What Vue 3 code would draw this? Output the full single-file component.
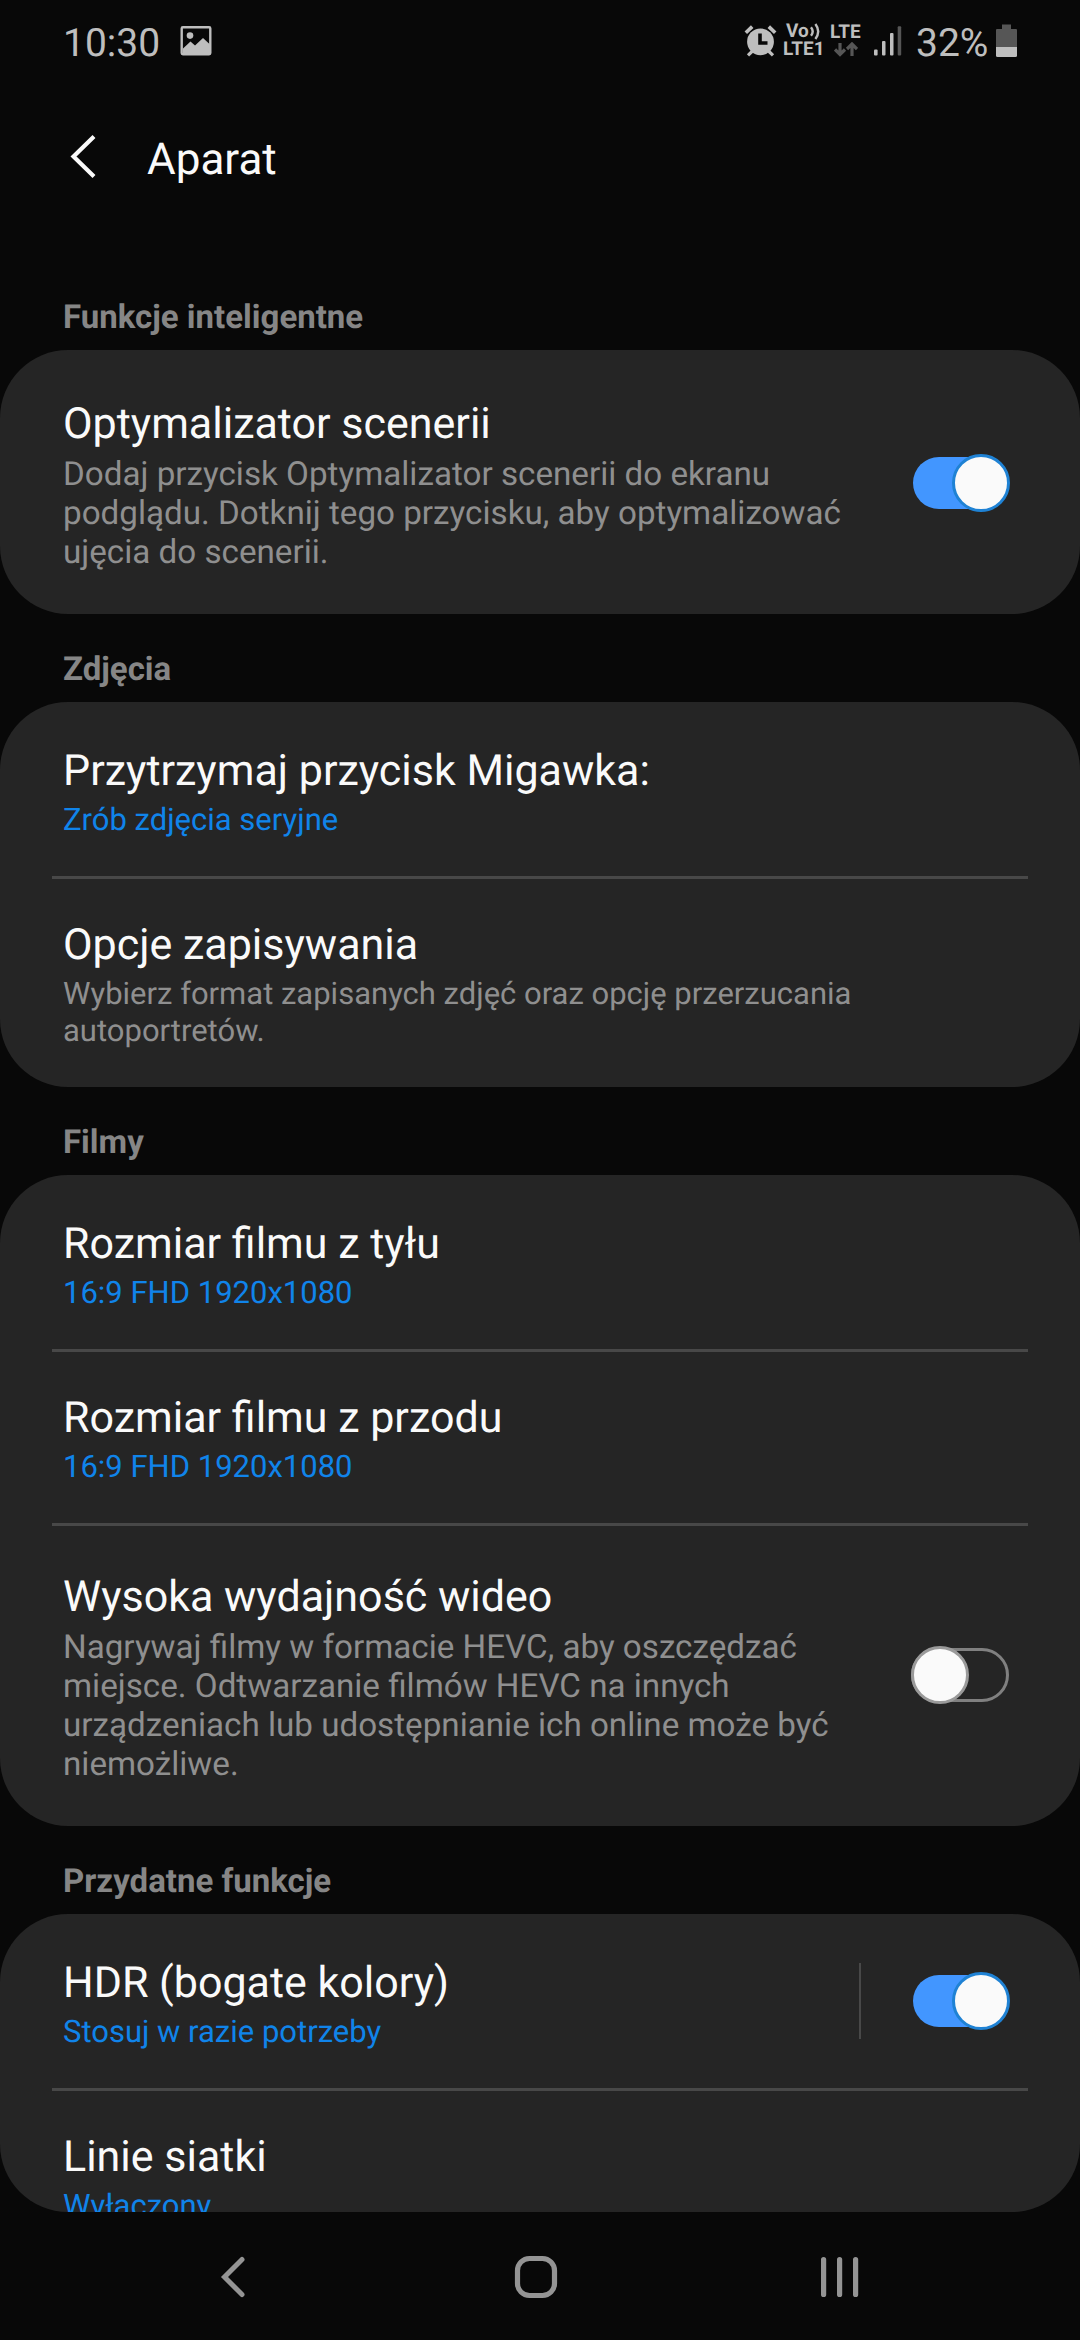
<template>
  <div class="screen">
    <header class="status">
      <span class="clock">10:30</span>
      <svg class="picture" width="32" height="30" viewBox="0 0 32 30" aria-hidden="true">
        <rect x="1.7" y="1.2" width="28.6" height="27.1" rx="1.2" fill="none" stroke="currentColor" stroke-width="2.4" />
        <circle cx="10" cy="9.6" r="3.3" fill="currentColor" />
        <path d="M3 22.5 L10.5 15.5 L15 19.5 L23 12 L30 18.5 V28 H3 Z" fill="currentColor" />
      </svg>

      <div class="tray">
        <svg class="alarm" width="33" height="32" viewBox="0 0 33 32" aria-hidden="true">
          <path d="M1.8 7.8 L8.2 1.6 M24.8 1.6 L31.2 7.8" stroke="currentColor" stroke-width="3.6" fill="none" />
          <path d="M8.5 26 L4 30.4 M24.5 26 L29 30.4" stroke="currentColor" stroke-width="3.2" fill="none" />
          <circle cx="16.5" cy="16.8" r="13.4" fill="currentColor" />
          <path d="M16 8.5 V18 H23.5" fill="none" stroke="#080808" stroke-width="3.6" />
        </svg>
        <div class="volte">
          <span class="vo">
            Vo
            <svg width="11" height="17" viewBox="0 0 11 17" aria-hidden="true">
              <path d="M1 4.2 Q4.4 8.5 1 12.8 M5.4 1 Q11 8.5 5.4 16" fill="none" stroke="currentColor" stroke-width="2.4" />
            </svg>
          </span>
          <span class="lte1">LTE1</span>
        </div>
        <div class="lte">
          <span>LTE</span>
          <svg width="24" height="15" viewBox="0 0 24 15" aria-hidden="true">
            <path d="M6 1 V11.5 M1 7.5 L6 12.5 L11 7.5 M18 14 V3 M13 7 L18 2 L23 7" fill="none" stroke="currentColor" stroke-width="3.2" />
          </svg>
        </div>
        <svg class="signal" width="28" height="30" viewBox="0 0 28 30" aria-hidden="true">
          <rect x="0" y="23.5" width="3.6" height="6" rx="1" fill="currentColor" />
          <rect x="8" y="15" width="3.5" height="14.5" rx="1" fill="currentColor" />
          <rect x="16" y="7" width="3.5" height="22.5" rx="1" fill="currentColor" />
          <rect x="23.7" y="0.3" width="3.5" height="29.2" rx="1" fill="#565656" />
        </svg>
        <span class="percent">32%</span>
        <svg class="battery" width="21" height="33" viewBox="0 0 21 33" aria-hidden="true">
          <path d="M6 0.5 H15 V5 H20 Q21 5 21 6 V23 H0 V6 Q0 5 1 5 H6 Z" fill="#565656" />
          <path d="M0 23 H21 V31.5 Q21 33 19.5 33 H1.5 Q0 33 0 31.5 Z" fill="currentColor" />
        </svg>
      </div>
    </header>

    <div class="toolbar">
      <svg class="back" width="28" height="44" viewBox="0 0 28 44" aria-hidden="true">
        <path d="M24 2.5 L3.5 22.5 L24 42.5" fill="none" stroke="currentColor" stroke-width="4.2" />
      </svg>
      <h1 class="heading">Aparat</h1>
    </div>

    <main class="content">
      <section v-for="group in groups" :key="group.name">
        <h2 class="group-name">{{ group.name }}</h2>
        <div class="card">
          <div
            v-for="row in group.rows"
            :key="row.title"
            class="row"
            :class="{ tall: row.tall }"
          >
            <div class="text">
              <p class="title">{{ row.title }}</p>
              <p class="desc" :class="{ value: row.value }">{{ row.value || row.desc }}</p>
            </div>
            <span v-if="row.split" class="split"></span>
            <span v-if="row.on !== undefined" class="switch" :class="{ on: row.on }" @click="row.on = !row.on">
              <span class="thumb"></span>
            </span>
          </div>
        </div>
      </section>
    </main>

    <nav class="navbar">
      <svg width="28" height="44" viewBox="0 0 28 44" aria-hidden="true">
        <path d="M23 4.5 L5.5 22 L23 39.5" fill="none" stroke="currentColor" stroke-width="5" stroke-linecap="round" />
      </svg>
      <svg class="home" width="44" height="44" viewBox="0 0 44 44" aria-hidden="true">
        <rect x="3.5" y="3.5" width="37" height="37" rx="12" fill="none" stroke="currentColor" stroke-width="5.2" />
      </svg>
      <svg width="40" height="44" viewBox="0 0 40 44" aria-hidden="true">
        <path d="M3.6 4.5 V39.5 M19.6 4.5 V39.5 M35.6 4.5 V39.5" fill="none" stroke="currentColor" stroke-width="5.2" stroke-linecap="round" />
      </svg>
    </nav>
  </div>
</template>

<script setup>
import { ref } from 'vue';

const groups = ref([
  {
    name: 'Funkcje inteligentne',
    rows: [
      {
        title: 'Optymalizator scenerii',
        desc: 'Dodaj przycisk Optymalizator scenerii do ekranu podglądu. Dotknij tego przycisku, aby optymalizować ujęcia do scenerii.',
        tall: true,
        on: true
      }
    ]
  },
  {
    name: 'Zdjęcia',
    rows: [
      { title: 'Przytrzymaj przycisk Migawka:', value: 'Zrób zdjęcia seryjne' },
      { title: 'Opcje zapisywania', desc: 'Wybierz format zapisanych zdjęć oraz opcję przerzucania autoportretów.' }
    ]
  },
  {
    name: 'Filmy',
    rows: [
      { title: 'Rozmiar filmu z tyłu', value: '16:9 FHD 1920x1080' },
      { title: 'Rozmiar filmu z przodu', value: '16:9 FHD 1920x1080' },
      {
        title: 'Wysoka wydajność wideo',
        desc: 'Nagrywaj filmy w formacie HEVC, aby oszczędzać miejsce. Odtwarzanie filmów HEVC na innych urządzeniach lub udostępnianie ich online może być niemożliwe.',
        tall: true,
        on: false
      }
    ]
  },
  {
    name: 'Przydatne funkcje',
    rows: [
      { title: 'HDR (bogate kolory)', value: 'Stosuj w razie potrzeby', split: true, on: true },
      { title: 'Linie siatki', value: 'Wyłączony' }
    ]
  }
]);
</script>

<style>
body {
  margin: 0;
  background: #080808;
}
</style>

<style scoped>
.screen {
  display: flex;
  flex-direction: column;
  width: 1080px;
  height: 2340px;
  overflow: hidden;
  background: #080808;
  color: #fafafa;
  font-family: Roboto, "Noto Sans", sans-serif;
  text-rendering: geometricPrecision;
}

.status {
  display: flex;
  align-items: flex-start;
  box-sizing: border-box;
  height: 80px;
  padding: 20px 63px 0 63px;
  color: #bebebe;
}

.clock,
.percent {
  font-size: 39px;
  line-height: 46px;
}

.clock {
  width: 97px;
}

.picture {
  margin: 6px 0 0 20px;
}

.tray {
  display: flex;
  margin-left: auto;
}

.alarm {
  margin: 5px 6px 0 0;
}

.volte,
.lte {
  display: flex;
  flex-direction: column;
  font-size: 19px;
  font-weight: 700;
  line-height: 18px;
}

.volte {
  width: 47px;
  margin-top: 2px;
}

.vo {
  display: flex;
  align-items: center;
  gap: 1px;
  padding-left: 3px;
}

.lte {
  width: 44px;
  margin-top: 3px;
}

.lte svg {
  margin: 1px 0 0 4px;
  color: #565656;
}

.signal {
  margin-top: 6px;
}

.percent {
  margin-left: 14px;
  width: 71px;
}

.battery {
  margin: 4px 0 0 9px;
}

.toolbar {
  display: flex;
  box-sizing: border-box;
  height: 182px;
  padding: 53px 0 0 70px;
}

.back {
  margin-top: 1px;
}

.heading {
  margin: 0 0 0 49px;
  font-size: 44px;
  font-weight: 400;
  line-height: 52px;
}

.content {
  flex: 1;
  min-height: 0;
  overflow: hidden;
  border-radius: 0 0 68px 68px;
}

.group-name {
  box-sizing: border-box;
  height: 88px;
  margin: 0;
  padding: 36px 63px 0;
  color: #868686;
  font-size: 33px;
  font-weight: 700;
  line-height: 39px;
}

.card {
  border-radius: 68px;
  background: #252525;
}

.row {
  position: relative;
  display: flex;
  align-items: center;
  padding: 44px 70px 38px 63px;
}

.row.tall {
  padding-top: 49px;
  padding-bottom: 42px;
}

.row + .row::before {
  content: "";
  position: absolute;
  top: 0;
  left: 52px;
  right: 52px;
  height: 3px;
  background: #484848;
}

.text {
  flex: 1;
}

.title {
  margin: 0 0 4px;
  font-size: 43px;
  line-height: 51px;
}

.desc {
  margin: 0;
  color: #8f8f8f;
  font-size: 31px;
  line-height: 37px;
}

.tall .title {
  margin-bottom: 5px;
}

.tall .desc {
  max-width: 800px;
  font-size: 33.2px;
  line-height: 39px;
}

.desc.value {
  color: #1084ea;
}

.split {
  width: 2px;
  height: 76px;
  margin: 0 52px 6px 0;
  background: #484848;
}

.switch {
  position: relative;
  box-sizing: border-box;
  flex: none;
  width: 98px;
  height: 54px;
  margin: 0 1px 6px 0;
  border: 3px solid #808080;
  border-radius: 27px;
}

.thumb {
  position: absolute;
  top: -5px;
  left: -3px;
  box-sizing: border-box;
  width: 58px;
  height: 58px;
  border: 3px solid #9a9a9a;
  border-radius: 50%;
  background: #fafafa;
}

.switch.on {
  width: 96px;
  height: 52px;
  border: 0;
  background: #4296ff;
}

.switch.on .thumb {
  top: -3px;
  left: 39px;
  border-color: #1f82d4;
}

.navbar {
  display: flex;
  align-items: center;
  justify-content: space-between;
  height: 126px;
  padding: 2px 220px 0 219px;
  color: #949494;
}

.home {
  margin-left: 5px;
}
</style>
